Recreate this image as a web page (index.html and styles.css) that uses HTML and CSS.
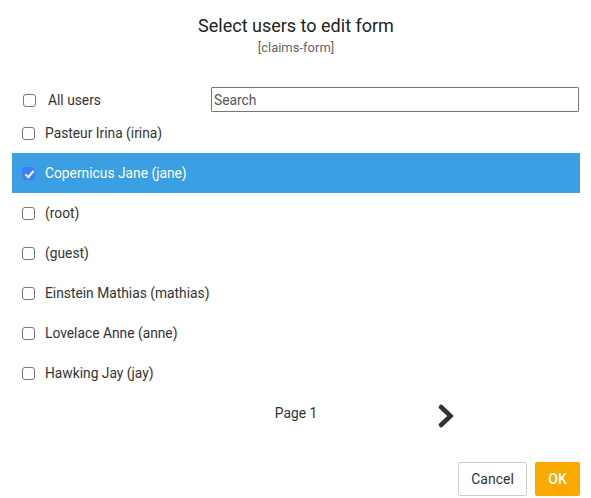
FILE: index.html
```html
<!DOCTYPE html>
<html>
<head>
<meta charset="utf-8">
<link rel="stylesheet" href="styles.css">
</head>
<body>
<div class="dialog">
  <header class="head">
    <h1 class="title">Select users to edit form</h1>
    <div class="subtitle">[claims-form]</div>
  </header>
  <div class="toolbar">
    <label class="all"><input type="checkbox" class="cb"><span>All users</span></label>
    <input class="search" type="text" placeholder="Search">
  </div>
  <ul class="list">
    <li class="row"><input type="checkbox" class="cb"><span>Pasteur Irina (irina)</span></li>
    <li class="row selected"><input type="checkbox" class="cb" checked><span>Copernicus Jane (jane)</span></li>
    <li class="row"><input type="checkbox" class="cb"><span>(root)</span></li>
    <li class="row"><input type="checkbox" class="cb"><span>(guest)</span></li>
    <li class="row"><input type="checkbox" class="cb"><span>Einstein Mathias (mathias)</span></li>
    <li class="row"><input type="checkbox" class="cb"><span>Lovelace Anne (anne)</span></li>
    <li class="row"><input type="checkbox" class="cb"><span>Hawking Jay (jay)</span></li>
  </ul>
  <div class="pager">
    <div class="pager-side"></div>
    <div class="page">Page 1</div>
    <div class="pager-side">
      <svg class="next" width="18" height="26" viewBox="0 0 18 26"><polyline points="4,4 13.5,13 4,22" fill="none" stroke="#333" stroke-width="4.6" stroke-linecap="round" stroke-linejoin="miter"/></svg>
    </div>
  </div>
  <div class="actions">
    <button class="btn cancel">Cancel</button>
    <button class="btn ok">OK</button>
  </div>
</div>
</body>
</html>
```
FILE: styles.css
```css
* { box-sizing: border-box; }
html, body { margin: 0; padding: 0; background: #fff; }
body {
  font-family: Roboto, "Liberation Sans", Arial, sans-serif;
  color: #333;
  font-size: 13.8px;
}
.dialog {
  width: 591px;
  padding: 0 11px 0 12px;
}
.head {
  padding-top: 14px;
  text-align: center;
}
.title {
  margin: 0;
  font-size: 18px;
  font-weight: 400;
  line-height: 24px;
  color: #222;
}
.subtitle {
  margin-top: 2px;
  font-size: 13px;
  line-height: 16px;
  color: #666;
}
.toolbar {
  margin-top: 31px;
  height: 25px;
  display: flex;
  align-items: center;
}
.all {
  display: flex;
  align-items: center;
  gap: 12px;
  padding-left: 11px;
  padding-top: 1px;
}
.search {
  margin-left: auto;
  margin-right: 1px;
  width: 368px;
  height: 25px;
  border: 1px solid #767676;
  border-radius: 1px;
  padding: 0 2px;
  font-family: Roboto, "Liberation Sans", Arial, sans-serif;
  font-size: 13.8px;
  color: #333;
  outline: none;
}
.search::placeholder { color: #555; }
.list {
  list-style: none;
  margin: 1px 0 0;
  padding: 0;
}
.row {
  height: 40px;
  display: flex;
  align-items: center;
  gap: 10px;
  padding-left: 10px;
}
.row.selected {
  background: #3b9fe3;
  color: #fff;
}
.cb {
  appearance: none;
  -webkit-appearance: none;
  margin: 0;
  width: 13px;
  height: 13px;
  border: 1px solid #777;
  border-radius: 3px;
  background: #fff;
  position: relative;
  flex: none;
}
.cb:checked {
  background: #3f7ff6;
  border-color: #3f7ff6;
}
.cb:checked::after {
  content: "";
  position: absolute;
  left: 3.5px;
  top: 1px;
  width: 3px;
  height: 7px;
  border: solid #fff;
  border-width: 0 2px 2px 0;
  transform: rotate(40deg);
}
.pager {
  height: 40px;
  display: grid;
  grid-template-columns: 1fr auto 1fr;
  align-items: center;
}
.page {
  font-size: 13.8px;
  color: #333;
}
.pager-side {
  display: flex;
  align-items: center;
}
.next {
  margin-left: 120px;
  margin-top: 5px;
}
.actions {
  margin-top: 29px;
  display: flex;
  justify-content: flex-end;
  gap: 8px;
}
.btn {
  height: 34px;
  font-family: Roboto, "Liberation Sans", Arial, sans-serif;
  font-size: 14px;
  border-radius: 2px;
  cursor: pointer;
}
.cancel {
  width: 69px;
  background: #fff;
  border: 1px solid #ccc;
  color: #333;
}
.ok {
  width: 45px;
  background: #f9a900;
  border: 1px solid #f9a900;
  color: #fff;
  font-weight: 500;
}
```
